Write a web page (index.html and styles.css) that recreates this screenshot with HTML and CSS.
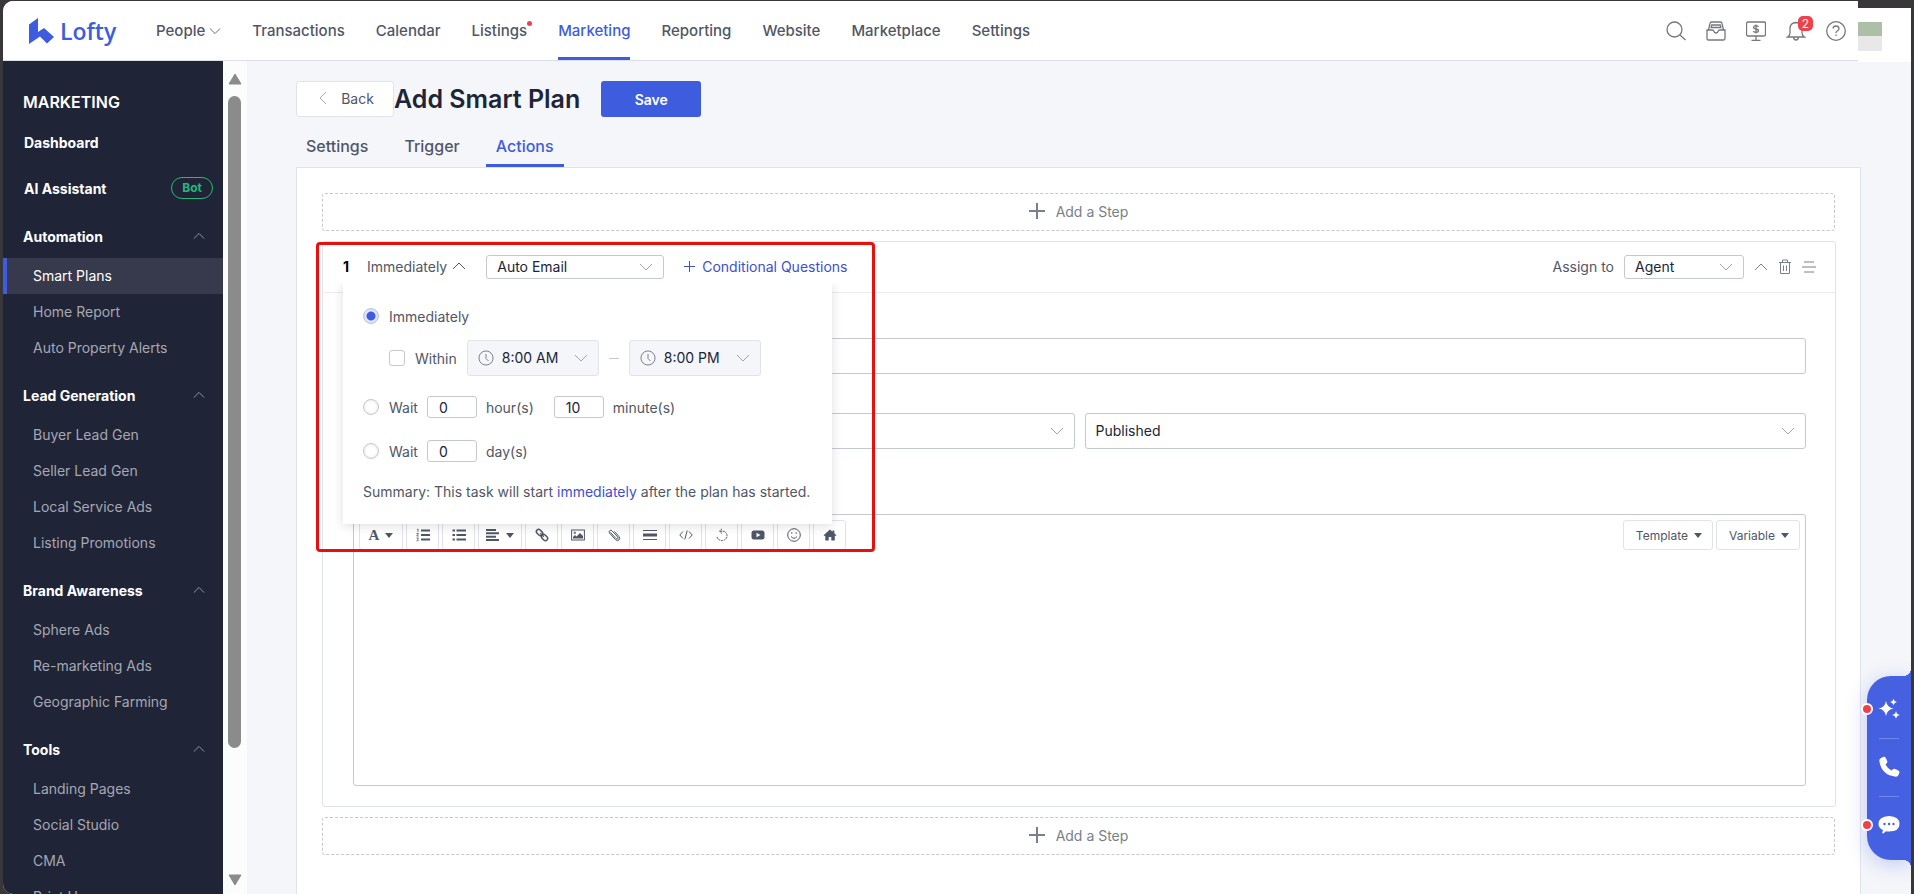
FILE: index.html
```
<!DOCTYPE html>
<html lang="en">
<head>
    <meta charset="utf-8">
    <title>Lofty - Add Smart Plan</title>
    <link rel="stylesheet" href="styles.css">
</head>
<body>
    <svg class="sprite" aria-hidden="true">
        <symbol id="down" viewBox="0 0 14 14"><path d="M1 4l6 6 6-6" fill="none" stroke="currentColor"/></symbol>
        <symbol id="up" viewBox="0 0 14 14"><path d="M1 10l6-6 6 6" fill="none" stroke="currentColor"/></symbol>
        <symbol id="plus" viewBox="0 0 16 16"><path d="M8 0v16M0 8h16" fill="none" stroke="currentColor" stroke-width="2"/></symbol>
        <symbol id="caret" viewBox="0 0 8 5"><path d="M0 0h8L4 5z" fill="currentColor"/></symbol>
        <symbol id="clock" viewBox="0 0 16 16"><path d="M8 1a7 7 0 1 0 .01 0zM8 4v4.500l2.500 2.500" fill="none" stroke="currentColor"/></symbol>
    </svg>

    <div class="app">
        <header class="header">
            <a class="logo" href="#">
                <svg width="26" height="26" viewBox="0 0 26 26"><path fill="currentColor" d="M0 6.500L9 0v14l6-4 10 9-7 6.500-7-7L0 26z"/></svg>
                <span>Lofty</span>
            </a>
            <nav class="nav">
                <a href="#">People <svg class="nav-arrow"><use href="#down"/></svg></a>
                <a href="#">Transactions</a>
                <a href="#">Calendar</a>
                <a href="#">Listings<i class="nav-dot"></i></a>
                <a href="#" class="active">Marketing</a>
                <a href="#">Reporting</a>
                <a href="#">Website</a>
                <a href="#">Marketplace</a>
                <a href="#">Settings</a>
            </nav>
            <div class="tools">
                <button aria-label="Search"><svg viewBox="0 0 20 20"><circle cx="8.500" cy="8.500" r="7.500"/><path d="M14 14l5.500 5"/></svg></button>
                <button aria-label="Inbox"><svg viewBox="0 0 20 20"><path d="M2.500 9L4 2.500Q4.300 1 5.500 1h9Q15.700 1 16 2.500L17.500 9M5 7l.8-3h8.400l.8 3M1 9h5q1.500 0 2 1.500T10 12t2-1.500T14 9h5v8.500q0 1.500-1.500 1.500h-15Q1 19 1 17.500zM4.500 6.500h11"/></svg></button>
                <button aria-label="Billing"><svg viewBox="0 0 20 20"><rect x=".5" y="1" width="19" height="14" rx="1.500"/><path d="M10 15v4M5.500 19.500h9M12.500 6Q12 4.700 10 4.700T7.500 6.300Q7.500 7.700 10 8t2.500 1.700Q12.500 11.300 10 11.300T7.500 10M10 3.500v9"/></svg></button>
                <button aria-label="Notifications"><svg viewBox="0 0 20 20"><path d="M1.500 16h17Q16 14.500 16 12V7.500Q16 2 10 1.500 4 2 4 7.500V12q0 2.500-2.500 4zM7.500 16.500Q8 19 10 19t2.500-2.500"/></svg><span class="count">2</span></button>
                <button aria-label="Help"><svg viewBox="0 0 20 20"><circle cx="10" cy="10" r="9.300"/><path d="M7 7.500Q7.300 5 10 5t3 2.500Q13 9 11.500 9.800T10 12M10 13.500v1.500"/></svg></button>
            </div>
            <div class="account"><span class="avatar"></span></div>
        </header>

        <div class="body">
            <aside class="sidebar">
                <h2>MARKETING</h2>
                <a class="top-link" href="#">Dashboard</a>
                <a class="top-link" href="#">AI Assistant <span class="bot">Bot</span></a>
                <button class="group">Automation <svg><use href="#up"/></svg></button>
                <a class="item active" href="#">Smart Plans</a>
                <a class="item" href="#">Home Report</a>
                <a class="item" href="#">Auto Property Alerts</a>
                <button class="group">Lead Generation <svg><use href="#up"/></svg></button>
                <a class="item" href="#">Buyer Lead Gen</a>
                <a class="item" href="#">Seller Lead Gen</a>
                <a class="item" href="#">Local Service Ads</a>
                <a class="item" href="#">Listing Promotions</a>
                <button class="group">Brand Awareness <svg><use href="#up"/></svg></button>
                <a class="item" href="#">Sphere Ads</a>
                <a class="item" href="#">Re-marketing Ads</a>
                <a class="item" href="#">Geographic Farming</a>
                <button class="group">Tools <svg><use href="#up"/></svg></button>
                <a class="item" href="#">Landing Pages</a>
                <a class="item" href="#">Social Studio</a>
                <a class="item" href="#">CMA</a>
                <a class="item" href="#">Print House</a>
            </aside>
            <div class="scrollbar">
                <svg width="14" height="12" viewBox="0 0 14 12"><path d="M7 1l6 10H1z" fill="currentColor" stroke="currentColor" stroke-linejoin="round"/></svg>
                <div class="rail"><div class="thumb"></div></div>
                <svg width="14" height="12" viewBox="0 0 14 12"><path d="M7 11L1 1h12z" fill="currentColor" stroke="currentColor" stroke-linejoin="round"/></svg>
            </div>

            <main class="main">
                <div class="page-head">
                    <button class="back"><svg width="10" height="16" viewBox="0 0 10 16"><path d="M8 2L2 8l6 6" fill="none" stroke="#a8abb8"/></svg>Back</button>
                    <h1>Add Smart Plan</h1>
                    <button class="save">Save</button>
                </div>
                <nav class="tabs">
                    <a href="#">Settings</a>
                    <a href="#">Trigger</a>
                    <a href="#" class="active">Actions</a>
                </nav>

                <div class="panel">
                    <button class="add-step"><svg><use href="#plus"/></svg>Add a Step</button>

                    <section class="step">
                        <div class="step-head">
                            <b>1</b>
                            <button class="when">Immediately <svg><use href="#up"/></svg></button>
                            <label class="select small type">
                                <select aria-label="Step type"><option>Auto Email</option></select>
                                <svg><use href="#down"/></svg>
                            </label>
                            <button class="conditional"><svg viewBox="0 0 11 11"><path d="M5.500 0v11M0 5.500h11" fill="none" stroke="currentColor"/></svg>Conditional Questions</button>
                            <label class="assign" for="assign">Assign to</label>
                            <div class="select small agent">
                                <select id="assign"><option>Agent</option></select>
                                <svg><use href="#down"/></svg>
                            </div>
                            <div class="step-icons">
                                <button aria-label="Collapse"><svg><use href="#up"/></svg></button>
                                <button aria-label="Delete"><svg viewBox="0 0 14 16"><path d="M1 3.500h12M4.500 3V1h5v2M2.500 4v10.500h9V4M5.500 6.500v5.500M8.500 6.500v5.500" fill="none" stroke="currentColor"/></svg></button>
                                <button aria-label="Reorder"><svg viewBox="0 0 14 14"><path d="M2 2h10M0 7h14M2 12h10" fill="none" stroke="currentColor"/></svg></button>
                            </div>
                        </div>

                        <form class="fields">
                            <input class="subject" type="text" aria-label="Subject">
                            <div class="pair">
                                <label class="select">
                                    <select aria-label="Template folder"><option></option></select>
                                    <svg><use href="#down"/></svg>
                                </label>
                                <label class="select">
                                    <select aria-label="Status"><option>Published</option></select>
                                    <svg><use href="#down"/></svg>
                                </label>
                            </div>
                            <div class="editor">
                                <div class="toolbar">
                                    <button type="button" class="wide" aria-label="Font"><span class="letter">A</span><svg class="caret"><use href="#caret"/></svg></button>
                                    <button type="button" aria-label="Ordered list"><svg viewBox="0 0 14 14"><path d="M5 2.500h9M5 7h9M5 11.500h9" stroke-width="2"/><path d="M1 1.500l1-.5v3M.5 5.500h2L.7 8h2M.5 10h2l-1 1.300 1 1-2 .7" stroke-width=".8"/></svg></button>
                                    <button type="button" aria-label="Bullet list"><svg viewBox="0 0 14 14"><path d="M4.500 2.500H14M4.500 7H14M4.500 11.500H14M.5 2.500h2.500M.5 7h2.500M.5 11.500h2.500" stroke-width="2"/></svg></button>
                                    <button type="button" class="wide" aria-label="Align"><svg viewBox="0 0 14 14"><path d="M0 2h10M0 5.300h13M0 8.700h10M0 12h13" stroke-width="2"/></svg><svg class="caret"><use href="#caret"/></svg></button>
                                    <button type="button" aria-label="Link"><svg viewBox="0 0 14 14"><g transform="rotate(45 7 7)"><rect x="0" y="4.800" width="7" height="4.400" rx="2.200" stroke-width="1.500"/><rect x="7" y="4.800" width="7" height="4.400" rx="2.200" stroke-width="1.500"/><path d="M4.500 7h5" stroke-width="1.500"/></g></svg></button>
                                    <button type="button" aria-label="Image"><svg viewBox="0 0 14 14"><rect x=".6" y="2" width="12.800" height="10"/><circle cx="3.800" cy="4.800" r=".8"/><path d="M2 10.500V9l2-2 1.500 1.500L9 5l3 3v2.500z" fill="currentColor" stroke="none"/></svg></button>
                                    <button type="button" aria-label="Attachment"><svg viewBox="0 0 14 14"><path d="M3.500 4.500l5.500 6q1 1 1.800.3t0-1.700L5 2.800Q3.800 1.700 2.700 2.700T2.500 5l6 6.700q2 1.800 3.500.3t0-3.500L7.500 3.500"/></svg></button>
                                    <button type="button" aria-label="Line"><svg viewBox="0 0 14 14"><path d="M0 2.500h14M0 11.500h14"/><path d="M0 7h14" stroke-width="3"/></svg></button>
                                    <button type="button" aria-label="Code"><svg viewBox="0 0 14 14"><path d="M4 3.500L.8 7 4 10.500M10 3.500L13.200 7 10 10.500M8.200 2.500l-2.400 9"/></svg></button>
                                    <button type="button" aria-label="Undo"><svg viewBox="0 0 14 14"><path d="M5 3.200h3q4 .8 4 4.500 0 4-5 5-5-1-5-4.500M7 .8L4.500 3.200 7 5.500" stroke-dasharray="2 .7"/></svg></button>
                                    <button type="button" aria-label="Video"><svg viewBox="0 0 14 14"><path fill="currentColor" stroke="none" fill-rule="evenodd" d="M3 2.500h8q2.500 0 2.500 2.500v4q0 2.500-2.500 2.500H3Q.5 11.500.5 9V5Q.5 2.500 3 2.500zM5.500 4.800v4.400L9.500 7z"/></svg></button>
                                    <button type="button" aria-label="Emoji"><svg viewBox="0 0 14 14"><circle cx="7" cy="7" r="6.300"/><path d="M4 8.500q3 3.500 6 0M4.800 4.200v1.600M9.200 4.200v1.600"/></svg></button>
                                    <button type="button" aria-label="Home"><svg viewBox="0 0 14 14"><path fill="currentColor" stroke="none" d="M7 1.500l2.500 2.200V2.500h1.800v2.800L13.500 7.300l-.8.800-.9-.7V12.500H8.300V9H5.700v3.500H2.300V7.400l-.9.700-.8-.8z"/></svg></button>
                                    <span class="spacer"></span>
                                    <button type="button" class="text">Template <svg class="caret"><use href="#caret"/></svg></button>
                                    <button type="button" class="text">Variable <svg class="caret"><use href="#caret"/></svg></button>
                                </div>
                                <textarea aria-label="Email body"></textarea>
                            </div>
                        </form>

                        <form class="delay">
                            <div class="row">
                                <label class="radio"><input type="radio" name="delay" checked>Immediately</label>
                            </div>
                            <div class="row within">
                                <label class="check"><input type="checkbox">Within</label>
                                <label class="select time">
                                    <svg class="clock"><use href="#clock"/></svg>
                                    <select aria-label="From"><option>8:00 AM</option></select>
                                    <svg><use href="#down"/></svg>
                                </label>
                                <span class="dash"></span>
                                <label class="select time">
                                    <svg class="clock"><use href="#clock"/></svg>
                                    <select aria-label="To"><option>8:00 PM</option></select>
                                    <svg><use href="#down"/></svg>
                                </label>
                            </div>
                            <div class="row wait">
                                <label class="radio"><input type="radio" name="delay">Wait</label>
                                <input class="num" id="hours" type="text" value="0"><label for="hours">hour(s)</label>
                                <input class="num minutes" id="minutes" type="text" value="10"><label for="minutes">minute(s)</label>
                            </div>
                            <div class="row wait">
                                <label class="radio"><input type="radio" name="delay">Wait</label>
                                <input class="num" id="days" type="text" value="0"><label for="days">day(s)</label>
                            </div>
                            <p>Summary: This task will start <em>immediately</em> after the plan has started.</p>
                        </form>
                        <div class="highlight"></div>
                    </section>

                    <button class="add-step"><svg><use href="#plus"/></svg>Add a Step</button>
                </div>
            </main>
        </div>

        <div class="dock">
            <button class="unread" aria-label="Assistant"><svg viewBox="0 0 22 22"><path d="M8 3q1 6.500 7.500 7.500Q9 11.500 8 18 7 11.500.5 10.500 7 9.500 8 3zM15.500.5q.5 3 3.500 3.500-3 .5-3.500 3.500Q15 4.500 12 4q3-.5 3.500-3.500zM18 13q.5 3.500 4 4-3.500.5-4 4-.5-3.500-4-4 3.500-.5 4-4z"/></svg></button>
            <button aria-label="Call"><svg viewBox="0 0 22 22"><path d="M4 1.500L5.500.8q1.500-.3 2.200 1L9.200 5q.5 1.300-.5 2.200L7.500 8.500q2 4 6 6l1.300-1.200q1-1 2.300-.4l3.300 1.600q1.300.8 1 2.200l-.9 2.300q-.7 1.800-2.700 1.700Q3 19 1.300 4.500 1.200 2.500 4 1.500z"/></svg></button>
            <button class="unread" aria-label="Chat"><svg viewBox="0 0 22 22"><path d="M11 2q10.500.5 10.500 8T11 17.500q-1.500 0-3-.3Q6 19.500 4 19.500l1-3.500Q.5 14 .5 10 .5 2.500 11 2z"/><g fill="#4560e0"><circle cx="6.500" cy="10" r="1.200"/><circle cx="11" cy="10" r="1.200"/><circle cx="15.500" cy="10" r="1.200"/></g></svg></button>
        </div>
    </div>
</body>
</html>
```
FILE: styles.css
```
*, *::before, *::after {
    box-sizing: border-box;
}
body {
    margin: 0;
    height: 100vh;
    padding: 1px 3px 0 3px;
    overflow: hidden;
    background: #39373a;
    color: #515666;
    font-family: Inter, "Liberation Sans", sans-serif;
    font-size: 14px;
}
button, input, select, textarea {
    font: inherit;
    color: inherit;
    margin: 0;
    border: 0;
    padding: 0;
    background: none;
}
a {
    color: inherit;
    text-decoration: none;
}
svg {
    flex: none;
}
.sprite {
    display: none;
}
.app {
    position: relative;
    height: 100%;
    display: flex;
    flex-direction: column;
    border-radius: 10px 0 0 10px;
    overflow: hidden;
    background: #f5f6fa;
}

/* header */
.header {
    flex: none;
    display: flex;
    height: 60px;
    background: #fff;
    border-bottom: 1px solid #dcdfe8;
}
.logo {
    display: flex;
    align-items: center;
    gap: 5px;
    width: 153px;
    padding-left: 26px;
    color: #3d5cde;
    font: 600 23px "Open Sans", sans-serif;
}
.nav {
    display: flex;
    gap: 31px;
    font-size: 15px;
    font-weight: 500;
}
.nav a {
    position: relative;
    display: flex;
    align-items: center;
    border-top: 3px solid transparent;
    border-bottom: 3px solid transparent;
}
.nav .active {
    color: #3d5cde;
    border-bottom-color: #3d5cde;
}
.nav-arrow {
    width: 12px;
    height: 12px;
    margin-left: 4px;
}
.nav-dot {
    position: absolute;
    top: 17px;
    right: -5px;
    width: 5px;
    height: 5px;
    border-radius: 50%;
    background: #f0414a;
}
.tools {
    display: flex;
    align-items: center;
    gap: 20px;
    margin-left: auto;
    padding-right: 12px;
}
.tools button {
    position: relative;
    display: flex;
}
.tools svg {
    width: 20px;
    height: 20px;
    fill: none;
    stroke: #75787f;
    stroke-width: 1.3;
}
.count {
    position: absolute;
    top: -5px;
    right: -7px;
    width: 15px;
    border-radius: 5px;
    background: #f0414a;
    color: #fff;
    font-size: 12px;
    line-height: 15px;
}
.account {
    width: 53px;
    height: 61px;
    border-top: 7px solid #39373a;
    padding-top: 14px;
    background: #fff;
}
.avatar {
    display: block;
    width: 24px;
    height: 29px;
    background: linear-gradient(#adbfa6 50%, #e8e8e8 50%);
}

/* sidebar */
.body {
    flex: 1;
    display: flex;
    min-height: 0;
}
.sidebar {
    flex: none;
    display: flex;
    flex-direction: column;
    width: 220px;
    overflow: hidden;
    background: #202437;
    color: #a5a8b3;
}
.sidebar h2 {
    margin: 0;
    padding: 28px 20px 0;
    color: #fff;
    font-size: 16px;
    font-weight: 600;
    line-height: 26px;
}
.top-link, .group {
    flex: none;
    display: flex;
    align-items: center;
    justify-content: space-between;
    color: #fff;
    font-weight: 700;
}
.top-link {
    height: 36px;
    margin-top: 10px;
    padding: 0 10px 2px 21px;
}
.group {
    height: 42px;
    margin-top: 9px;
    padding: 0 18px 2px 20px;
}
.group svg {
    width: 12px;
    height: 12px;
    color: #a5a8b3;
}
.bot {
    border: 1px solid #25b87c;
    border-radius: 11px;
    padding: 0 10px;
    color: #25b87c;
    font-size: 12px;
    line-height: 20px;
}
.item {
    flex: none;
    border-left: 4px solid transparent;
    padding-left: 26px;
    line-height: 36px;
}
.item.active {
    border-color: #3d5cde;
    background: #373a4c;
    color: #fff;
}
.scrollbar {
    flex: none;
    display: flex;
    flex-direction: column;
    align-items: center;
    gap: 11px;
    width: 24px;
    padding: 12px 1px 8px 0;
    background: #fcfcfc;
    color: #8b8b8b;
}
.rail {
    flex: 1;
}
.thumb {
    width: 13px;
    height: 85%;
    border-radius: 7px;
    background: #8b8b8b;
}

/* page */
.main {
    flex: 1;
    min-width: 0;
    padding: 20px 50px 0 49px;
    overflow: hidden;
}
.page-head {
    display: flex;
    align-items: center;
    height: 36px;
}
.page-head h1 {
    margin: 0 21px 0 0;
    color: #202437;
    font-size: 25px;
    font-weight: 600;
}
.back {
    display: flex;
    align-items: center;
    justify-content: center;
    gap: 13px;
    width: 98px;
    height: 36px;
    border: 1px solid #e1e3ec;
    border-radius: 3px;
    padding: 0 0 2px 2px;
    background: #fff;
}
.save {
    width: 100px;
    height: 36px;
    border-radius: 3px;
    background: #3d5cde;
    color: #fff;
    font-weight: 600;
}
.tabs {
    display: flex;
    gap: 16px;
    margin-top: 8px;
    font-size: 16px;
    font-weight: 500;
}
.tabs a {
    padding: 3px 10px 0;
    border-bottom: 3px solid transparent;
    line-height: 36px;
}
.tabs .active {
    color: #3d5cde;
    border-color: #3d5cde;
}
.panel {
    min-height: 100%;
    border: 1px solid #e1e3ec;
    padding: 25px;
    background: #fff;
}
.add-step {
    display: flex;
    align-items: center;
    justify-content: center;
    gap: 11px;
    width: 100%;
    height: 38px;
    border: 1px dashed #c6c8d1;
    border-radius: 3px;
    padding-bottom: 2px;
    color: #797e8b;
}
.add-step svg {
    width: 16px;
    height: 16px;
}

/* selects */
.select {
    display: flex;
    align-items: center;
    height: 36px;
    border: 1px solid #c6c8d1;
    border-radius: 3px;
    padding: 0 10px;
    background: #fff;
    color: #202437;
}
.select select {
    flex: 1;
    min-width: 0;
    padding-bottom: 2px;
    appearance: none;
}
.select svg {
    width: 14px;
    height: 14px;
    color: #a0a3af;
    pointer-events: none;
}
.select.small {
    height: 24px;
}

/* step */
.step {
    position: relative;
    margin: 10px -1px 10px 0;
    border: 1px solid #e1e3ec;
    border-radius: 3px;
}
.step-head {
    display: flex;
    align-items: center;
    height: 51px;
    border-bottom: 1px solid #ebecf1;
    padding: 0 19px 0 20px;
}
.step-head b {
    width: 24px;
    padding-bottom: 2px;
    color: #000;
}
.when {
    display: flex;
    align-items: center;
    gap: 5px;
    margin-right: 20px;
    padding-bottom: 2px;
}
.when svg {
    width: 14px;
    height: 14px;
}
.type {
    width: 178px;
}
.conditional {
    display: flex;
    align-items: center;
    gap: 7px;
    margin-left: 20px;
    padding-bottom: 2px;
    color: #3d4fd0;
}
.conditional svg {
    width: 11px;
    height: 11px;
}
.assign {
    margin-left: auto;
    margin-right: 10px;
    padding-bottom: 2px;
}
.agent {
    width: 120px;
}
.step-icons {
    display: flex;
    align-items: center;
    gap: 10px;
    margin-left: 10px;
    color: #797e8b;
}
.step-icons button {
    display: flex;
}
.step-icons svg {
    width: 14px;
    height: 16px;
}
.fields {
    padding: 45px 29px 20px 30px;
}
.subject {
    display: block;
    width: 100%;
    height: 36px;
    border: 1px solid #c6c8d1;
    border-radius: 3px;
    padding: 0 10px;
}
.pair {
    display: grid;
    grid-template-columns: 1fr 1fr;
    gap: 10px;
    margin: 39px 0 65px;
}
.editor {
    border: 1px solid #c6c8d1;
    border-radius: 3px;
}
.toolbar {
    display: flex;
    gap: 3px;
    padding: 5px;
}
.toolbar button {
    display: flex;
    align-items: center;
    justify-content: center;
    gap: 6px;
    width: 33px;
    height: 30px;
    border: 1px solid #e1e3ec;
    border-radius: 3px;
}
.toolbar .wide {
    width: 44px;
}
.toolbar .text {
    width: auto;
    padding: 0 10px 0 12px;
    font-size: 12px;
}
.toolbar svg {
    width: 14px;
    height: 14px;
    fill: none;
    stroke: currentColor;
}
.toolbar .caret {
    width: 8px;
    height: 5px;
    stroke: none;
}
.letter {
    font: 700 15px "Liberation Serif", serif;
}
.spacer {
    flex: 1;
}
.editor textarea {
    display: block;
    width: 100%;
    height: 230px;
    padding: 10px;
    resize: none;
}

/* delay popup */
.delay {
    position: absolute;
    top: 41px;
    left: 20px;
    width: 489px;
    padding: 23px 20px;
    background: #fff;
    box-shadow: 0 2px 10px rgba(32, 36, 55, .15);
    clip-path: inset(0 -12px -14px -12px);
}
.row, .radio, .check {
    display: flex;
    align-items: center;
}
.row {
    height: 20px;
}
.radio, .check {
    gap: 10px;
}
.radio input, .check input {
    appearance: none;
    width: 16px;
    height: 16px;
    border: 1px solid #c6c8d1;
    background: #fff;
}
.radio input {
    border-radius: 50%;
    box-shadow: inset 0 0 3px rgba(32, 36, 55, .15);
}
.radio input:checked {
    border-color: #b4c0f0;
    background: radial-gradient(#3d5cde 4px, #e9edfb 5px);
}
.check input {
    border-radius: 3px;
}
.within {
    height: 36px;
    margin: 14px 0 19px;
    padding-left: 26px;
}
.time {
    width: 132px;
    margin-left: 10px;
    border-color: #e1e3ec;
    background: #f5f6fa;
}
.time .clock {
    width: 16px;
    height: 16px;
    margin-right: 8px;
    color: #797e8b;
}
.dash {
    width: 10px;
    height: 1px;
    margin-left: 10px;
    background: #c6c8d1;
}
.wait {
    height: 24px;
    margin-bottom: 20px;
}
.num {
    width: 50px;
    height: 22px;
    margin: 0 9px;
    border: 1px solid #c6c8d1;
    border-radius: 3px;
    padding: 0 11px;
    color: #202437;
}
.minutes {
    margin-left: 20px;
}
.delay p {
    margin: 0;
    line-height: 18px;
}
.delay em {
    color: #3d4fd0;
    font-style: normal;
}
.highlight {
    position: absolute;
    top: 0;
    left: -7px;
    width: 559px;
    height: 310px;
    border: 3px solid #e8100f;
    border-radius: 4px;
    pointer-events: none;
}

/* dock */
.dock {
    position: absolute;
    right: 0;
    bottom: 34px;
    display: flex;
    flex-direction: column;
    width: 44px;
    padding: 4px 0 6px;
    border-radius: 24px 0 0 24px;
    background: #4560e0;
    box-shadow: 0 4px 20px rgba(69, 96, 224, .3);
}
/* flared corners where the dock meets the window edge */
.dock::before, .dock::after {
    content: "";
    position: absolute;
    right: 0;
    width: 8px;
    height: 8px;
}
.dock::before {
    top: -8px;
    background: radial-gradient(circle at 0 0, transparent 8px, #4560e0 8px);
}
.dock::after {
    bottom: -8px;
    background: radial-gradient(circle at 0 100%, transparent 8px, #4560e0 8px);
}
.dock button {
    position: relative;
    display: flex;
    align-items: center;
    justify-content: center;
    height: 58px;
}
.dock svg {
    width: 22px;
    height: 22px;
    fill: #fff;
}
.dock button + button::before {
    content: "";
    position: absolute;
    top: 0;
    left: 12px;
    width: 20px;
    border-top: 1px solid #6f86ea;
}
.unread::after {
    content: "";
    position: absolute;
    top: 23px;
    left: -6px;
    width: 12px;
    height: 12px;
    border: 2px solid #fff;
    border-radius: 50%;
    background: #f0414a;
}
```
